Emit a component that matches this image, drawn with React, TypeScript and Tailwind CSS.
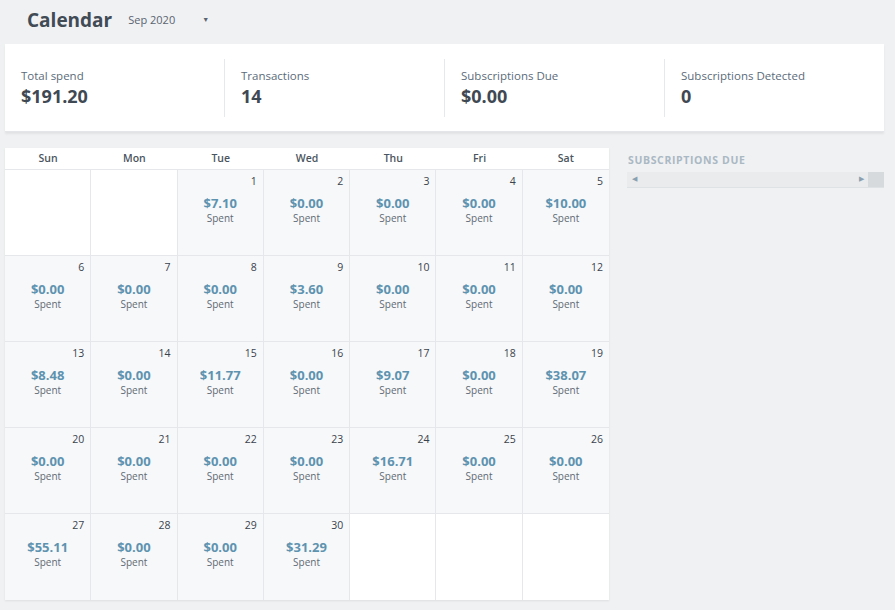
import React from "react";

const days: (null | { d: number; amt: string })[] = [
  null, null,
  { d: 1, amt: "$7.10" }, { d: 2, amt: "$0.00" }, { d: 3, amt: "$0.00" }, { d: 4, amt: "$0.00" }, { d: 5, amt: "$10.00" },
  { d: 6, amt: "$0.00" }, { d: 7, amt: "$0.00" }, { d: 8, amt: "$0.00" }, { d: 9, amt: "$3.60" }, { d: 10, amt: "$0.00" }, { d: 11, amt: "$0.00" }, { d: 12, amt: "$0.00" },
  { d: 13, amt: "$8.48" }, { d: 14, amt: "$0.00" }, { d: 15, amt: "$11.77" }, { d: 16, amt: "$0.00" }, { d: 17, amt: "$9.07" }, { d: 18, amt: "$0.00" }, { d: 19, amt: "$38.07" },
  { d: 20, amt: "$0.00" }, { d: 21, amt: "$0.00" }, { d: 22, amt: "$0.00" }, { d: 23, amt: "$0.00" }, { d: 24, amt: "$16.71" }, { d: 25, amt: "$0.00" }, { d: 26, amt: "$0.00" },
  { d: 27, amt: "$55.11" }, { d: 28, amt: "$0.00" }, { d: 29, amt: "$0.00" }, { d: 30, amt: "$31.29" },
  null, null, null,
];

const stats = [
  { label: "Total spend", value: "$191.20" },
  { label: "Transactions", value: "14" },
  { label: "Subscriptions Due", value: "$0.00" },
  { label: "Subscriptions Detected", value: "0" },
];

export default function App() {
  return (
    <div
      className="w-[895px] h-[610px] bg-[#f0f1f3] overflow-hidden text-[#3d4852]"
      style={{ fontFamily: '"Open Sans", "Noto Sans", sans-serif' }}
    >
      <div className="h-[44px] flex items-center pl-[27px] pb-[4px]">
        <span className="text-[19px] font-bold text-[#414b55] leading-none">Calendar</span>
        <span className="ml-[16px] text-[11px] text-[#5a6470]">Sep 2020</span>
        <span className="ml-[27px] text-[7px] text-[#5a6470]">▼</span>
      </div>

      <div className="ml-[5px] w-[879px] h-[88px] bg-white shadow-[0_2px_2px_rgba(0,0,0,0.06)] border-b border-[#e3e5e8] flex items-center">
        {stats.map((s, i) => (
          <div
            key={s.label}
            className={
              "flex-1 h-[58px] pl-[16px] flex flex-col justify-center " +
              (i > 0 ? "border-l border-[#e6e8eb]" : "")
            }
          >
            <div className="text-[11.5px] text-[#5b6b7a] leading-[16px] mt-[1px]">{s.label}</div>
            <div className="text-[18px] font-bold text-[#3f4953] leading-[24px]">{s.value}</div>
          </div>
        ))}
      </div>

      <div className="flex mt-[16px] ml-[5px]">
        <div className="w-[604px] bg-white shadow-[0_1px_2px_rgba(0,0,0,0.08)]">
          <div className="grid grid-cols-7 h-[22px] border-b border-[#e5e7ea]">
            {["Sun", "Mon", "Tue", "Wed", "Thu", "Fri", "Sat"].map((d) => (
              <div key={d} className="flex items-center justify-center text-[10.5px] font-semibold text-[#4a5560]">
                {d}
              </div>
            ))}
          </div>
          <div className="grid grid-cols-7">
            {days.map((c, i) => (
              <div
                key={i}
                className={
                  "h-[86px] border-[#e5e7ea] " +
                  (i % 7 !== 6 ? "border-r " : "") +
                  (i < 28 ? "border-b " : "") +
                  (c ? "bg-[#f7f8fa]" : "bg-white")
                }
              >
                {c && (
                  <div className="flex flex-col h-full">
                    <div className="text-right pr-[6px] pt-[4px] text-[10.5px] text-[#3a434c] leading-[14px]">{c.d}</div>
                    <div className="text-center text-[13px] font-bold text-[#5e93b0] leading-[16px] mt-[7px]">{c.amt}</div>
                    <div className="text-center text-[10px] text-[#5f6a74] leading-[14px]">Spent</div>
                  </div>
                )}
              </div>
            ))}
          </div>
        </div>

        <div className="ml-[18px] w-[257px] pt-[5px]">
          <div className="text-[10.5px] font-bold tracking-[0.06em] text-[#aab8c4] leading-[14px] pl-[1px]">
            SUBSCRIPTIONS DUE
          </div>
          <div className="mt-[5px] h-[16px] flex items-stretch bg-[#e9ebed] border-b border-[#dfe2e5]">
            <div className="w-[14px] flex items-center justify-center text-[7px] text-[#8aa0b0]">◀</div>
            <div className="flex-1" />
            <div className="w-[14px] flex items-center justify-center text-[7px] text-[#8aa0b0]">▶</div>
            <div className="w-[16px] bg-[#d6dadd]" />
          </div>
        </div>
      </div>
    </div>
  );
}
